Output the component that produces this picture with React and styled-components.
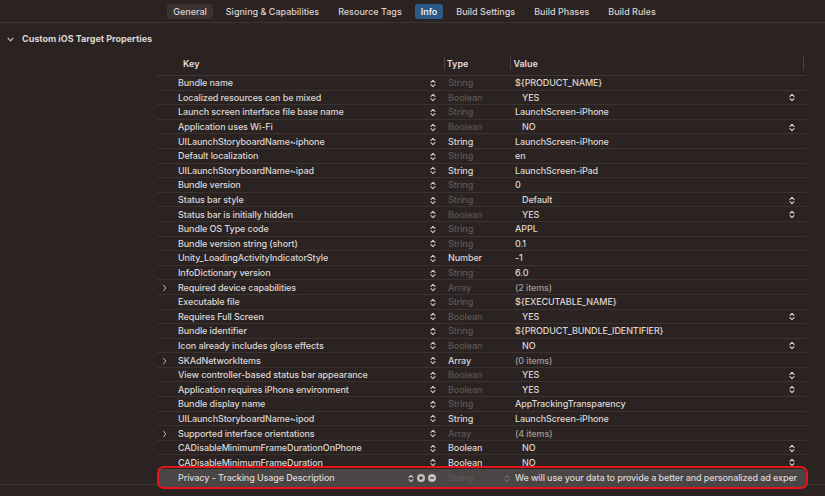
import React from 'react';
import styled, { createGlobalStyle } from 'styled-components';

const Global = createGlobalStyle`
  html, body { margin: 0; padding: 0; background: #2a2321; }
  body { font-family: Inter, "Liberation Sans", sans-serif; -webkit-font-smoothing: antialiased; }
`;

const Page = styled.div`
  width: 825px;
  height: 496px;
  overflow: hidden;
  background: #2a2321;
  color: #dcd6d4;
  font-size: 9px;
`;

const TabBar = styled.div`
  height: 22px;
  border-bottom: 1px solid #3d3533;
  display: flex;
  justify-content: center;
  align-items: center;
  gap: 7px;
  padding-left: 4px;
`;

const Tab = styled.div`
  height: 15px;
  padding: 0 6px;
  border-radius: 3px;
  display: flex;
  align-items: center;
  font-weight: 500;
  color: ${p => (p.$active ? '#ffffff' : '#d8d2d0')};
  background: ${p => (p.$active ? '#2b5a86' : p.$soft ? '#3a3230' : 'transparent')};
`;

const SectionHeader = styled.div`
  height: 32px;
  box-sizing: border-box;
  display: flex;
  align-items: flex-start;
  gap: 8px;
  padding: 10px 0 0 7px;
  font-weight: 700;
  line-height: 12px;
  color: #dcd6d4;
  svg { margin-top: 3.5px; }
`;

const Table = styled.div`
  margin-left: 157px;
  width: 649px;
  display: flex;
  flex-direction: column;
`;

const Header = styled.div`
  border-bottom: 1px solid #3d3533;
  display: flex;
  align-items: flex-start;
  padding-top: 2px;
  box-sizing: content-box;
  height: 18px;
`;

const HeadCell = styled.div`
  width: ${p => p.$w}px;
  display: flex;
  align-items: center;
  height: 13px;
  font-weight: 600;
  color: #e2dcda;
  padding-left: ${p => p.$pl || 0}px;
  box-sizing: border-box;
`;

const HeadSep = styled.div`
  width: 1px;
  height: 13px;
  background: #4a4240;
  margin-right: 2px;
  flex: none;
`;

const Row = styled.div`
  height: 14.6px;
  box-sizing: border-box;
  padding-top: 1px;
  border-bottom: 1px solid #3a3230;
  display: grid;
  grid-template-columns: 21px 227px 40px 56px 11px 294px;
  align-items: center;
  line-height: 12px;
  font-weight: 500;
  letter-spacing: -0.1px;
`;

const SelectedRow = styled(Row)`
  margin-top: -1.5px;
  height: 19px;
  padding-top: 0;
  border-bottom: none;
  background: #4a4646;
  border-radius: 5px;
  position: relative;
  z-index: 1;
  &::after {
    content: '';
    position: absolute;
    top: -2.5px;
    bottom: -1.5px;
    left: 0;
    right: -2px;
    border: 2px solid #e3151b;
    border-radius: 7px;
    pointer-events: none;
  }
`;

const ExpCell = styled.div`
  display: flex;
  align-items: center;
  padding-left: 5px;
  color: #b8b2b0;
`;

const KeyCell = styled.div`
  white-space: nowrap;
  overflow: hidden;
  color: #dcd6d4;
`;

const IconCell = styled.div`
  display: flex;
  justify-content: flex-end;
  align-items: center;
  gap: 3px;
  padding-right: 9px;
  color: #cfc9c7;
`;

const TypeCell = styled.div`
  padding-left: 3px;
  white-space: nowrap;
  color: ${p => (p.$bright ? '#dcd6d4' : '#5f5755')};
`;

const PopCell = styled.div`
  display: flex;
  justify-content: center;
  color: #6f6866;
`;

const ValueCell = styled.div`
  display: flex;
  align-items: center;
  justify-content: space-between;
  padding-left: ${p => (p.$indent ? 10 : 3)}px;
  padding-right: ${p => (p.$clip ? 4 : 11)}px;
  overflow: hidden;
  white-space: nowrap;
  color: ${p => (p.$muted ? '#a39c9a' : '#dcd6d4')};
`;

const ValueText = styled.span`
  white-space: nowrap;
`;

const Divider = styled.div`
  margin-top: -4px;
  height: 1px;
  background: #3d3533;
`;

const Stepper = () => (
  <svg width="6" height="9" viewBox="0 0 6 9" fill="none" stroke="currentColor" strokeWidth="1.1" strokeLinecap="round" strokeLinejoin="round">
    <path d="M1 3.3 L3 1.3 L5 3.3 M1 5.7 L3 7.7 L5 5.7" />
  </svg>
);

const ChevronRight = () => (
  <svg width="5" height="8" viewBox="0 0 5 8" fill="none" stroke="currentColor" strokeWidth="1" strokeLinecap="round" strokeLinejoin="round">
    <path d="M1.5 1.2 L3.8 4 L1.5 6.8" />
  </svg>
);

const ChevronDown = () => (
  <svg width="7" height="5" viewBox="0 0 7 5" fill="none" stroke="#cfc9c7" strokeWidth="1.1" strokeLinecap="round" strokeLinejoin="round">
    <path d="M1 1.2 L3.5 3.8 L6 1.2" />
  </svg>
);

const CircleBtn = ({ plus }) => (
  <svg width="8" height="8" viewBox="0 0 8 8">
    <circle cx="4" cy="4" r="4" fill="#c6c0be" />
    <path d={plus ? 'M2 4 H6 M4 2 V6' : 'M2 4 H6'} stroke="#4a4646" strokeWidth="1.3" />
  </svg>
);

const rows = [
  ['Bundle name', 'String', false, '${PRODUCT_NAME}'],
  ['Localized resources can be mixed', 'Boolean', false, 'YES', 'drop'],
  ['Launch screen interface file base name', 'String', false, 'LaunchScreen-iPhone'],
  ['Application uses Wi-Fi', 'Boolean', false, 'NO', 'drop'],
  ['UILaunchStoryboardName~iphone', 'String', true, 'LaunchScreen-iPhone'],
  ['Default localization', 'String', false, 'en'],
  ['UILaunchStoryboardName~ipad', 'String', true, 'LaunchScreen-iPad'],
  ['Bundle version', 'String', false, '0'],
  ['Status bar style', 'String', false, 'Default', 'drop'],
  ['Status bar is initially hidden', 'Boolean', false, 'YES', 'drop'],
  ['Bundle OS Type code', 'String', false, 'APPL'],
  ['Bundle version string (short)', 'String', false, '0.1'],
  ['Unity_LoadingActivityIndicatorStyle', 'Number', true, '-1'],
  ['InfoDictionary version', 'String', false, '6.0'],
  ['Required device capabilities', 'Array', false, '(2 items)', 'items'],
  ['Executable file', 'String', false, '${EXECUTABLE_NAME}'],
  ['Requires Full Screen', 'Boolean', false, 'YES', 'drop'],
  ['Bundle identifier', 'String', false, '${PRODUCT_BUNDLE_IDENTIFIER}'],
  ['Icon already includes gloss effects', 'Boolean', false, 'NO', 'drop'],
  ['SKAdNetworkItems', 'Array', true, '(0 items)', 'items'],
  ['View controller-based status bar appearance', 'Boolean', false, 'YES', 'drop'],
  ['Application requires iPhone environment', 'Boolean', false, 'YES', 'drop'],
  ['Bundle display name', 'String', false, 'AppTrackingTransparency'],
  ['UILaunchStoryboardName~ipod', 'String', true, 'LaunchScreen-iPhone'],
  ['Supported interface orientations', 'Array', false, '(4 items)', 'items'],
  ['CADisableMinimumFrameDurationOnPhone', 'Boolean', true, 'NO', 'drop'],
  ['CADisableMinimumFrameDuration', 'Boolean', true, 'NO', 'drop'],
];

const tabs = ['General', 'Signing & Capabilities', 'Resource Tags', 'Info', 'Build Settings', 'Build Phases', 'Build Rules'];

export default function App() {
  return (
    <Page>
      <Global />
      <TabBar>
        {tabs.map(t => (
          <Tab key={t} $active={t === 'Info'} $soft={t === 'General'}>{t}</Tab>
        ))}
      </TabBar>
      <SectionHeader>
        <ChevronDown />
        <span>Custom iOS Target Properties</span>
      </SectionHeader>
      <Table>
        <Header>
          <HeadCell $w={288} $pl={26}>Key</HeadCell>
          <HeadCell $w={67}><HeadSep />Type</HeadCell>
          <HeadCell $w={294}><HeadSep />Value</HeadCell>
          <HeadSep />
        </Header>
        {rows.map(([k, type, bright, value, kind]) => (
          <Row key={k}>
            <ExpCell>{kind === 'items' && <ChevronRight />}</ExpCell>
            <KeyCell>{k}</KeyCell>
            <IconCell><Stepper /></IconCell>
            <TypeCell $bright={bright}>{type}</TypeCell>
            <PopCell />
            <ValueCell $indent={kind === 'drop'} $muted={kind === 'items'}>
              <ValueText>{value}</ValueText>
              {kind === 'drop' && <Stepper />}
            </ValueCell>
          </Row>
        ))}
        <SelectedRow>
          <ExpCell />
          <KeyCell>Privacy - Tracking Usage Description</KeyCell>
          <IconCell>
            <Stepper />
            <CircleBtn plus />
            <CircleBtn />
          </IconCell>
          <TypeCell>String</TypeCell>
          <PopCell><Stepper /></PopCell>
          <ValueCell $clip>
            <ValueText>We will use your data to provide a better and personalized ad exper</ValueText>
          </ValueCell>
        </SelectedRow>
      </Table>
      <Divider />
    </Page>
  );
}
